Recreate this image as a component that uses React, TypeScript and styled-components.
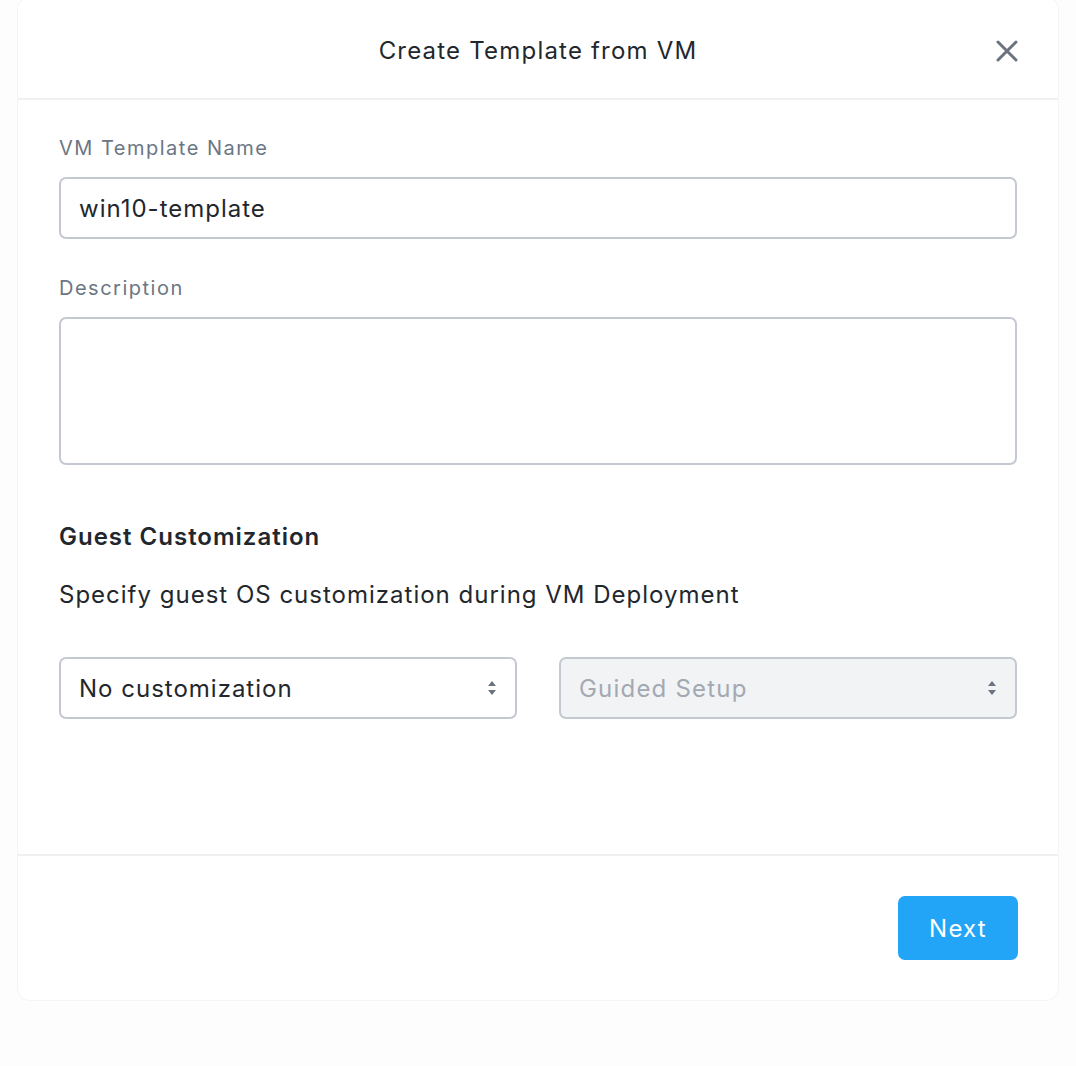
import React from "react";
import styled, { createGlobalStyle } from "styled-components";

const Global = createGlobalStyle`
  html, body { margin: 0; padding: 0; background: #fdfdfd; }
  body { font-family: Inter, Lato, sans-serif; color: #22272e; letter-spacing: 1px; }
  * { box-sizing: border-box; }
`;

const Page = styled.div`
  width: 1076px;
  height: 1066px;
  padding-left: 18px;
  overflow: hidden;
`;

const Card = styled.div`
  width: 1040px;
  height: 1002px;
  margin-top: -2px;
  background: #ffffff;
  border-radius: 12px;
  box-shadow: 0 0 0 1px rgba(0, 0, 0, 0.03);
  display: flex;
  flex-direction: column;
`;

const Header = styled.div`
  height: 102px;
  padding-top: 4px;
  border-bottom: 2px solid #f0f0f1;
  display: flex;
  align-items: center;
  justify-content: center;
  position: relative;
`;

const Title = styled.h1`
  margin: 0;
  font-size: 24px;
  font-weight: 400;
  letter-spacing: 1.2px;
  color: #22272e;
`;

const Close = styled.button`
  position: absolute;
  right: 39px;
  top: 41px;
  width: 24px;
  height: 24px;
  border: none;
  background: none;
  padding: 0;
  display: flex;
  align-items: center;
  justify-content: center;
`;

const Body = styled.div`
  flex: 1;
  padding: 36px 41px 0 41px;
  display: flex;
  flex-direction: column;
  border-bottom: 2px solid #f0f0f1;
`;

const Label = styled.label`
  display: block;
  font-size: 20px;
  line-height: 24px;
  letter-spacing: 1.5px;
  color: #6b7684;
  margin-bottom: 17px;
`;

const TextInput = styled.div`
  height: 62px;
  border: 2px solid #c4c8d0;
  border-radius: 7px;
  padding: 0 18px;
  display: flex;
  align-items: center;
  font-size: 24px;
  color: #22272e;
  margin-bottom: 37px;
`;

const TextArea = styled.div`
  height: 148px;
  border: 2px solid #c4c8d0;
  border-radius: 7px;
`;

const SectionTitle = styled.h2`
  margin: 57px 0 0 0;
  font-size: 24px;
  line-height: 30px;
  font-weight: 600;
  color: #22272e;
`;

const SectionText = styled.p`
  margin: 28px 0 0 0;
  font-size: 24px;
  line-height: 30px;
  color: #22272e;
`;

const SelectRow = styled.div`
  margin-top: 47px;
  display: grid;
  grid-template-columns: 1fr 1fr;
  gap: 42px;
`;

const Select = styled.div<{ $disabled?: boolean }>`
  height: 62px;
  border: 2px solid #c4c8d0;
  border-radius: 7px;
  padding: 0 18px;
  display: flex;
  align-items: center;
  justify-content: space-between;
  font-size: 24px;
  letter-spacing: ${(p) => (p.$disabled ? "1.2px" : "1px")};
  background: ${(p) => (p.$disabled ? "#f2f3f5" : "#ffffff")};
  color: ${(p) => (p.$disabled ? "#a3a9b2" : "#22272e")};
`;

const Footer = styled.div`
  padding: 40px 40px;
  display: flex;
  justify-content: flex-end;
`;

const NextButton = styled.button`
  width: 120px;
  height: 64px;
  border: none;
  border-radius: 7px;
  background: #22a5f7;
  color: #ffffff;
  font-family: inherit;
  font-size: 24px;
  letter-spacing: 1.2px;
`;

const Arrows = () => (
  <svg width="10" height="16" viewBox="0 0 10 16">
    <path d="M5 1 L9 6 H1 Z" fill="#6b7280" />
    <path d="M5 15 L9 10 H1 Z" fill="#6b7280" />
  </svg>
);

export default function App() {
  return (
    <>
      <Global />
      <Page>
        <Card>
          <Header>
            <Title>Create Template from VM</Title>
            <Close aria-label="Close">
              <svg width="22" height="22" viewBox="0 0 22 22">
                <path d="M2 2 L20 20 M20 2 L2 20" stroke="#6b7280" strokeWidth="3" strokeLinecap="round" />
              </svg>
            </Close>
          </Header>
          <Body>
            <Label>VM Template Name</Label>
            <TextInput>win10-template</TextInput>
            <Label>Description</Label>
            <TextArea />
            <SectionTitle>Guest Customization</SectionTitle>
            <SectionText>Specify guest OS customization during VM Deployment</SectionText>
            <SelectRow>
              <Select>
                <span>No customization</span>
                <Arrows />
              </Select>
              <Select $disabled>
                <span>Guided Setup</span>
                <Arrows />
              </Select>
            </SelectRow>
          </Body>
          <Footer>
            <NextButton>Next</NextButton>
          </Footer>
        </Card>
      </Page>
    </>
  );
}
